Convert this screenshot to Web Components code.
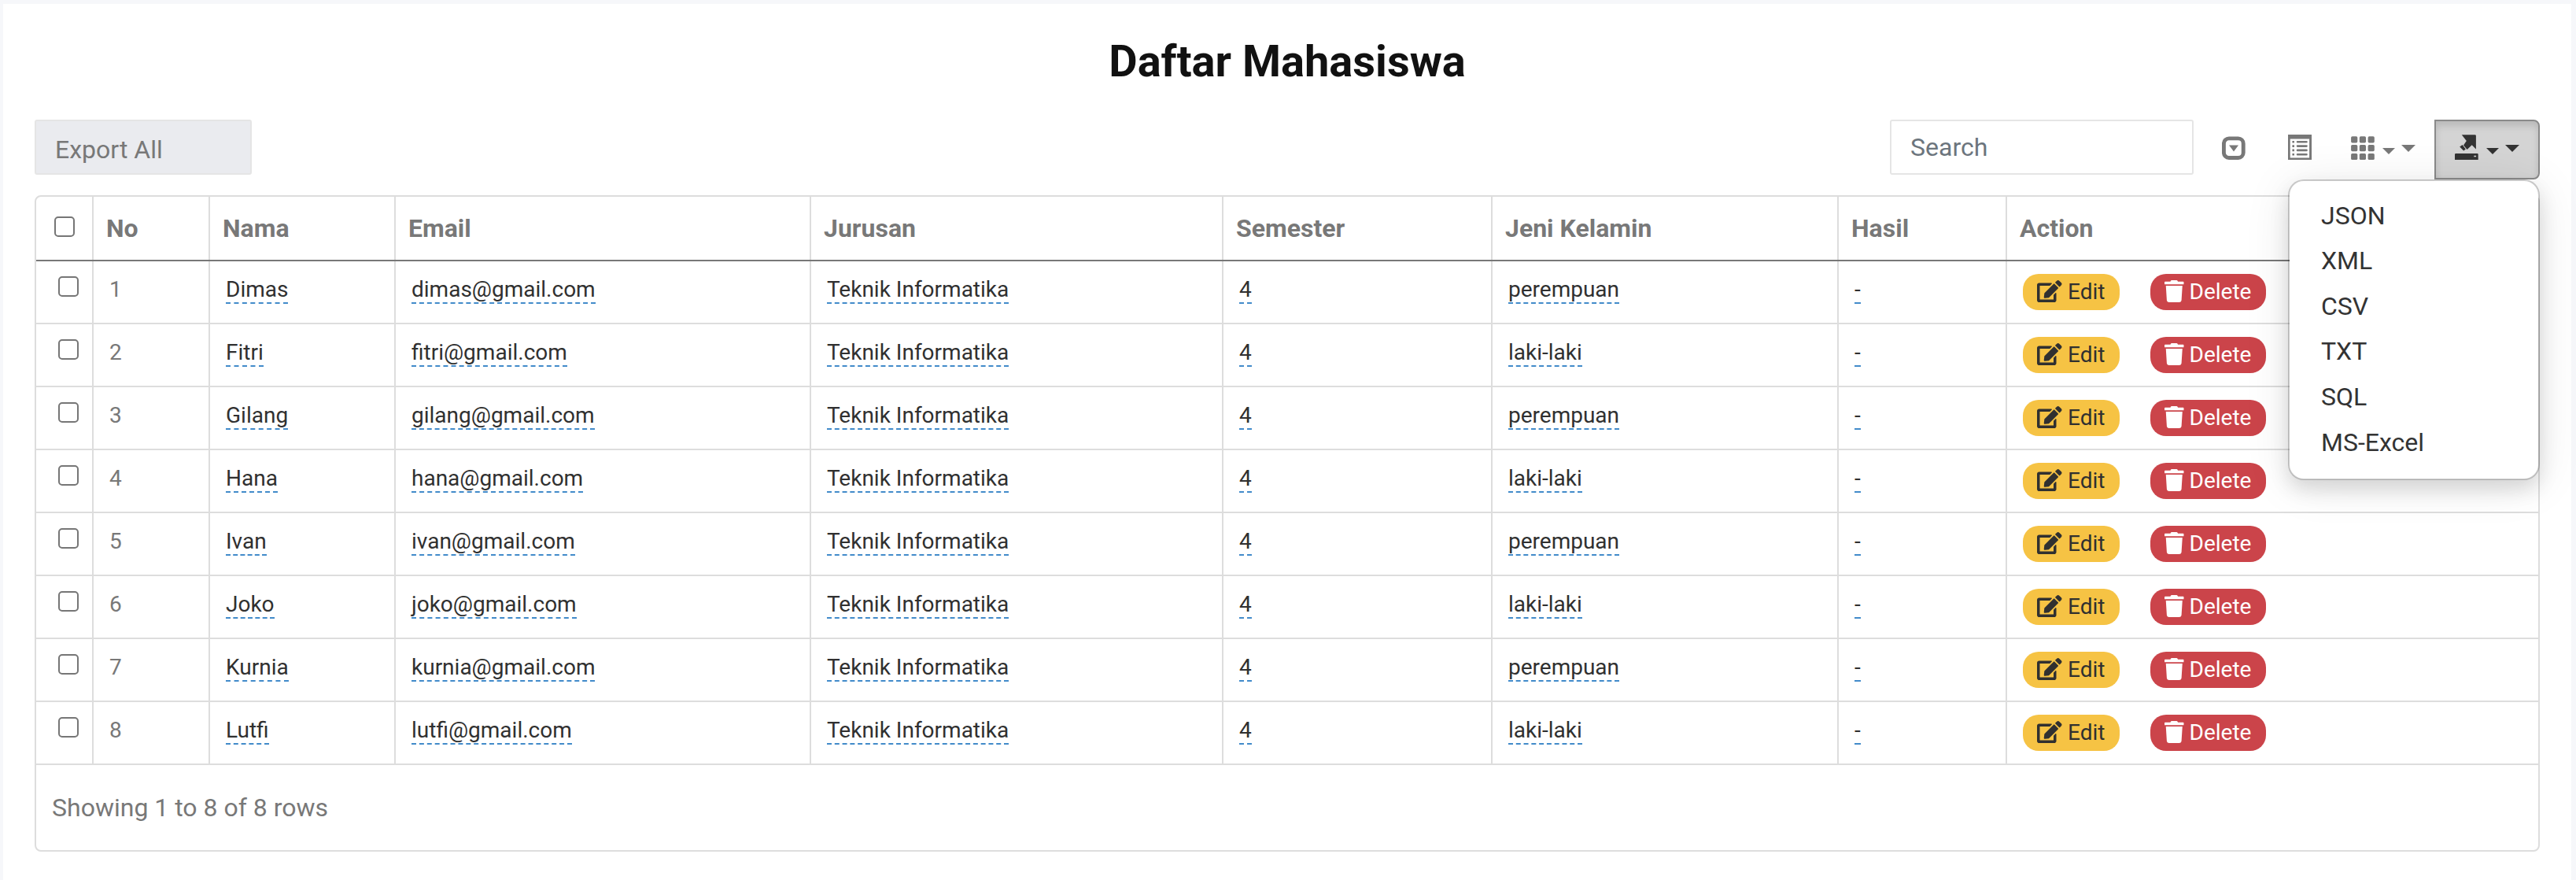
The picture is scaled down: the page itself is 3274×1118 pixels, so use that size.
<!DOCTYPE html>
<html lang="id">
<head>
<meta charset="utf-8">
<title>Daftar Mahasiswa</title>
<style>
  html, body { margin: 0; height: 100%; }
  body { background: #f6f7fa; font-family: Roboto, "Liberation Sans", sans-serif; font-size: 32px; color: #787878; overflow: hidden; }
</style>
</head>
<body>
<page-card heading="Daftar Mahasiswa">
  <table-toolbar slot="toolbar"></table-toolbar>
  <student-table></student-table>
</page-card>

<script>
const ICONS = {
  edit: ['0 0 576 512', '<path d="M402.6 83.2l90.2 90.2c3.8 3.8 3.8 10 0 13.8L274.4 405.6l-92.8 10.3c-12.4 1.4-22.9-9.1-21.5-21.5l10.3-92.8L388.8 83.2c3.8-3.8 10-3.8 13.8 0zm162-22.9l-48.8-48.8c-15.2-15.2-39.9-15.2-55.2 0l-35.4 35.4c-3.8 3.8-3.8 10 0 13.8l90.2 90.2c3.8 3.8 10 3.8 13.8 0l35.4-35.4c15.2-15.3 15.2-40 0-55.2zM384 346.2V448H64V128h229.8c3.2 0 6.2-1.3 8.5-3.5l40-40c7.6-7.6 2.2-20.5-8.5-20.5H48C21.5 64 0 85.5 0 112v352c0 26.5 21.5 48 48 48h352c26.5 0 48-21.5 48-48V306.2c0-10.7-12.9-16-20.5-8.5l-40 40c-2.2 2.3-3.5 5.3-3.5 8.5z"/>'],
  trash: ['0 0 448 512', '<path d="M432 32H312l-9.4-18.7A24 24 0 0 0 281.1 0H166.8a23.72 23.72 0 0 0-21.4 13.3L136 32H16A16 16 0 0 0 0 48v32a16 16 0 0 0 16 16h416a16 16 0 0 0 16-16V48a16 16 0 0 0-16-16zM53.2 467a48 48 0 0 0 47.9 45h245.8a48 48 0 0 0 47.9-45L416 128H32z"/>'],
  collapse: ['0 0 30 32', '<rect x="2.4" y="4.9" width="24.8" height="24.6" rx="6.5" fill="none" stroke="currentColor" stroke-width="4.9"/><path d="M9 13.5h12l-6 8z"/>'],
  list: ['0 0 30 32', '<path fill-rule="evenodd" d="M0 0h30v32H0zM2.7 5.4v24h24.4v-24z"/><path d="M5.4 8h2.6v2.6H5.4zM5.4 13.3h2.6v2.6H5.4zM5.4 18.6h2.6v2.6H5.4zM5.4 24h2.6v2.6H5.4z"/><path d="M12 9.3h11.5M12 14.6h11.5M12 19.9h11.5M12 25.3h11.5" stroke="currentColor" stroke-width="2.6" stroke-linecap="round"/>'],
  grid: ['0 0 30 32', '<g>' + [2.3, 13.1, 23.9].map(y => [0.1, 10.8, 21.6].map(x => `<rect x="${x}" y="${y}" width="8.2" height="8.1" rx="1.6"/>`).join('')).join('') + '</g>'],
  export: ['0 0 30 32', '<path d="M8.8 0.2H25.5a1.4 1.4 0 0 1 1.4 1.4V18.4L21.7 13.2 15.6 18.9 11 13.5 14.8 8z"/><path d="M9.6 13L13.8 18.6 11.2 20.6 6.2 15.6z"/><path fill-rule="evenodd" d="M1.2 24H28.5a1.2 1.2 0 0 1 1.2 1.2V32H0V25.2A1.2 1.2 0 0 1 1.2 24zM24.3 26.8v1.4h2.8v-1.4z"/>']
};

class UiIcon extends HTMLElement {
  connectedCallback() {
    const [box, body] = ICONS[this.getAttribute('name')];
    const root = this.attachShadow({ mode: 'open' });
    root.innerHTML = `<style>:host{display:block;flex:none}svg{display:block;width:100%;height:100%;fill:currentColor}</style><svg viewBox="${box}">${body}</svg>`;
  }
}

class UiCaret extends HTMLElement {
  connectedCallback() {
    this.attachShadow({ mode: 'open' }).innerHTML = `<style>
      :host{display:block;flex:none;width:0;height:0;border:solid transparent;border-width:8px 8px 0;border-top-color:currentColor}
      :host([large]){border-width:9px 9px 0}
    </style>`;
  }
}

class UiCheckbox extends HTMLElement {
  connectedCallback() {
    this.attachShadow({ mode: 'open' }).innerHTML = `<style>
      :host{display:block;flex:none}
      input{appearance:none;display:block;box-sizing:border-box;width:26px;height:26px;margin:0;border:2px solid #767676;border-radius:5px;background:#fff}
    </style><input type="checkbox">`;
  }
}

class UiBadge extends HTMLElement {
  connectedCallback() {
    this.attachShadow({ mode: 'open' }).innerHTML = `<style>
      :host{display:flex;box-sizing:border-box;align-items:center;height:46px;padding-left:18px;border-radius:20px;font-size:28px;line-height:46px;white-space:nowrap}
      :host([kind=edit]){width:123px;background:#f6c344;color:#303030}
      :host([kind=delete]){width:147px;background:#cb444a;color:#fff}
      ui-icon{height:28px;margin-bottom:3px}
      :host([kind=edit]) ui-icon{width:31.5px;margin-right:7.5px}
      :host([kind=delete]) ui-icon{width:24.5px;margin-right:7px}
    </style><ui-icon name="${this.getAttribute('kind') === 'edit' ? 'edit' : 'trash'}"></ui-icon><slot></slot>`;
  }
}

class ExportMenu extends HTMLElement {
  connectedCallback() {
    const items = ['JSON', 'XML', 'CSV', 'TXT', 'SQL', 'MS-Excel'];
    this.attachShadow({ mode: 'open' }).innerHTML = `<style>
      :host{display:block;position:relative;color:#333}
      .button{box-sizing:border-box;display:flex;width:134px;height:76px;padding:17px 0 0 24px;border:2px solid #8a8a8a;border-radius:0 8px 8px 0;background:#d4d4d4;box-shadow:inset 0 6px 10px rgba(0,0,0,.125)}
      .button ui-icon{width:30px;height:32px}
      .button ui-caret{margin:17px 0 0 10px}
      .button ui-caret[large]{margin:13px 0 0 8px}
      .menu{position:absolute;z-index:2;top:76px;right:0;box-sizing:border-box;width:320px;height:382px;margin:0;padding:15.6px 0;list-style:none;background:#fff;background-clip:padding-box;border:2px solid rgba(0,0,0,.2);border-radius:20px;box-shadow:0 12px 24px rgba(0,0,0,.12),0 6px 60px rgba(0,0,0,.09)}
      li{padding-left:40px;line-height:57.6px}
    </style>
    <div class="button"><ui-icon name="export"></ui-icon><ui-caret></ui-caret><ui-caret large></ui-caret></div>
    <ul class="menu">${items.map(t => `<li>${t}</li>`).join('')}</ul>`;
  }
}

class TableToolbar extends HTMLElement {
  connectedCallback() {
    this.attachShadow({ mode: 'open' }).innerHTML = `<style>
      :host{display:flex;height:76px}
      .select,.search{box-sizing:border-box;height:70px;border:2px solid #e5e5e5;border-radius:3px;line-height:66px}
      .select{width:276px;padding:3px 0 0 24px;background:#eaebef}
      .search{width:386px;padding-left:24px;margin-left:auto;background:#fff;color:#6c757d}
      .tools{display:flex;padding-top:19px}
      .tools ui-icon{width:30px;height:32px}
      .collapse{margin-left:35.5px}.list{margin-left:54.5px}.grid{margin-left:49.5px}
      .tools ui-caret{margin:17px 0 0 10.5px}
      .tools ui-caret[large]{margin:13px 0 0 8px}
      export-menu{margin-left:24px}
    </style>
    <div class="select">Export All</div>
    <div class="search">Search</div>
    <div class="tools">
      <ui-icon class="collapse" name="collapse"></ui-icon>
      <ui-icon class="list" name="list"></ui-icon>
      <ui-icon class="grid" name="grid"></ui-icon>
      <ui-caret></ui-caret><ui-caret large></ui-caret>
    </div>
    <export-menu></export-menu>`;
  }
}

class StudentRow extends HTMLElement {
  connectedCallback() {
    const [no, name, gender] = this.getAttribute('data').split('|');
    const fields = [name, name.toLowerCase() + '@gmail.com', 'Teknik Informatika', '4', gender, '-'];
    this.attachShadow({ mode: 'open' }).innerHTML = `<style>
      :host{display:grid;grid-template-columns:var(--columns);height:80px;box-sizing:border-box;border-bottom:2px solid #ddd;font-size:28px;line-height:42px}
      div{box-sizing:border-box;border-right:2px solid #ddd;padding:15px 0 0 20px;white-space:nowrap}
      .check{padding:19px 0 0 28px}
      .actions{display:flex;align-items:flex-start;gap:39px;padding-top:16px;border-right:0}
      span{color:#303030;border-bottom:2px dashed #428bca}
    </style>
    <div class="check"><ui-checkbox></ui-checkbox></div><div>${no}</div>
    ${fields.map(f => `<div><span>${f}</span></div>`).join('')}
    <div class="actions"><ui-badge kind="edit">Edit</ui-badge><ui-badge kind="delete">Delete</ui-badge></div>`;
  }
}

class StudentTable extends HTMLElement {
  connectedCallback() {
    const heads = ['No', 'Nama', 'Email', 'Jurusan', 'Semester', 'Jeni Kelamin', 'Hasil', 'Action'];
    const names = ['Dimas', 'Fitri', 'Gilang', 'Hana', 'Ivan', 'Joko', 'Kurnia', 'Lutfi'];
    this.attachShadow({ mode: 'open' }).innerHTML = `<style>
      :host{--columns:73px 148px 236px 528px 524px 342px 440px 214px 1fr;display:block;box-sizing:border-box;height:834px;border:2px solid #ddd;border-radius:8px}
      .head{display:grid;grid-template-columns:var(--columns);box-sizing:border-box;height:82px;border-bottom:2px solid #787878;font-weight:700;line-height:80px}
      .head div{box-sizing:border-box;padding-left:16px;border-right:2px solid #ddd;white-space:nowrap}
      .head .check{padding:25px 0 0 23px}
      .head div:last-child{border-right:0}
      .info{padding-left:20px;line-height:108px}
    </style>
    <div class="head"><div class="check"><ui-checkbox></ui-checkbox></div>${heads.map(h => `<div>${h}</div>`).join('')}</div>
    ${names.map((n, i) => `<student-row data="${i + 1}|${n}|${i % 2 ? 'laki-laki' : 'perempuan'}"></student-row>`).join('')}
    <div class="info">Showing 1 to 8 of 8 rows</div>`;
  }
}

class PageCard extends HTMLElement {
  connectedCallback() {
    this.attachShadow({ mode: 'open' }).innerHTML = `<style>
      :host{display:flex;flex-direction:column;box-sizing:border-box;height:100vh;border:solid #f6f7fa;border-width:5px 6px 0 4px;background:#fff;padding:31px 40px 0}
      h1{margin:0 0 32px;font-size:56px;font-weight:700;line-height:84px;color:#111;text-align:center}
      .toolbar{margin-bottom:20px}
    </style>
    <h1>${this.getAttribute('heading')}</h1>
    <div class="toolbar"><slot name="toolbar"></slot></div>
    <slot></slot>`;
  }
}

customElements.define('ui-icon', UiIcon);
customElements.define('ui-caret', UiCaret);
customElements.define('ui-checkbox', UiCheckbox);
customElements.define('ui-badge', UiBadge);
customElements.define('export-menu', ExportMenu);
customElements.define('table-toolbar', TableToolbar);
customElements.define('student-row', StudentRow);
customElements.define('student-table', StudentTable);
customElements.define('page-card', PageCard);
</script>
</body>
</html>
